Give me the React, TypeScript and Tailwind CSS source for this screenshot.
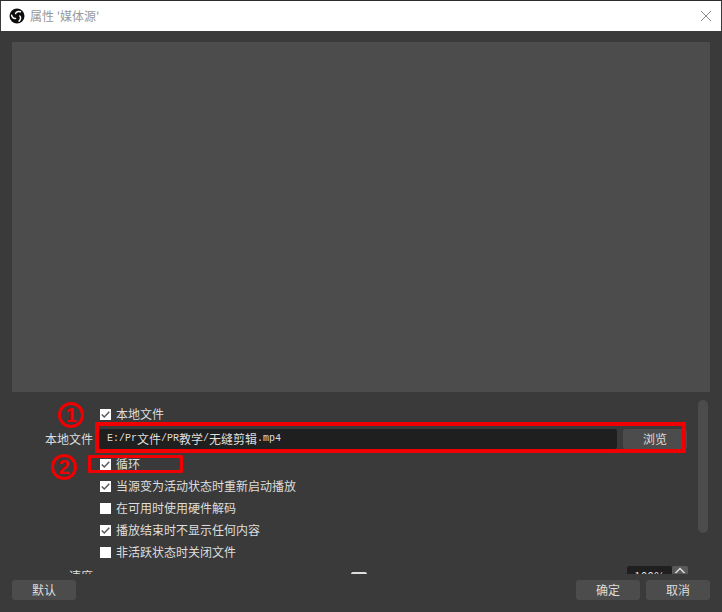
const cjk = { fontFamily: '"Noto Sans CJK SC", "Liberation Sans", sans-serif' }

function ObsLogo() {
  return (
    <svg width="16" height="16" viewBox="0 0 16 16" className="shrink-0">
      <circle cx="8" cy="8" r="7.5" fill="#0d0d0d" />
      <g fill="none" stroke="#fff" strokeWidth="1.5" strokeLinecap="round">
        <path d="M6.6 5.6C6.900 3.900 9.200 2.900 11.400 3.700" />
        <path d="M6.6 5.6C6.900 3.900 9.200 2.900 11.400 3.700" transform="rotate(120 8 8)" />
        <path d="M6.6 5.6C6.900 3.900 9.200 2.900 11.400 3.700" transform="rotate(240 8 8)" />
      </g>
    </svg>
  )
}

function CheckRow({ label, checked }: { label: string; checked: boolean }) {
  return (
    <div className="flex h-[22px] items-center pl-[88px]">
      <span className="flex h-[11px] w-[11px] items-center justify-center bg-white">
        {checked && (
          <svg width="11" height="11" viewBox="0 0 11 11">
            <path d="M1.800 5.500l2.500 2.500L9.300 2.700" fill="none" stroke="#5a5a5a" strokeWidth="1.5" />
          </svg>
        )}
      </span>
      <span className="ml-[5px] text-xs text-[#dedede]">{label}</span>
    </div>
  )
}

function DarkButton({ label, className }: { label: string; className: string }) {
  return (
    <button className={`flex h-5 items-center justify-center rounded-[3px] bg-[#4c4c4c] text-xs text-[#dedede] ${className}`}>
      {label}
    </button>
  )
}

function Mono({ children }: { children: string }) {
  return <span className="font-['Liberation_Mono'] text-[10px]">{children}</span>
}

export default function App() {
  return (
    <div className="relative flex h-[612px] w-[722px] flex-col overflow-hidden bg-[#3a3a3a]" style={cjk}>
      {/* Barra de titulo */}
      <div className="border-t border-[#2d2d2d]">
        <div className="mx-px flex h-[30px] items-center bg-white pl-2 pr-[9px]">
          <ObsLogo />
          <span className="ml-[5px] text-xs text-[#999999]">属性 '媒体源'</span>
          <svg width="12" height="12" viewBox="0 0 12 12" className="ml-auto">
            <path d="M1 1l10 10M11 1L1 11" stroke="#8a8a8a" strokeWidth="1" />
          </svg>
        </div>
      </div>

      <div className="flex flex-1 flex-col px-3 pt-[11px]">
        {/* Vista previa */}
        <div className="h-[350px] bg-[#4c4c4c]" />

        {/* Propiedades */}
        <div className="relative h-[182px] overflow-hidden pt-[11px]">
          <CheckRow label="本地文件" checked />
          <div className="mt-1 flex h-5 items-center">
            <span className="w-[81px] text-right text-xs text-[#dedede]">本地文件</span>
            <div className="ml-[6px] flex h-5 w-[518px] items-center rounded-[2px] bg-[#1f1f1f] pl-2 text-xs text-[#dedede]">
              <Mono>E:/Pr</Mono>文件<Mono>/PR</Mono>教学<Mono>/</Mono>无缝剪辑<Mono>.mp4</Mono>
            </div>
            <DarkButton label="浏览" className="ml-[6px] w-16" />
          </div>
          <div className="mt-1">
            <CheckRow label="循环" checked />
            <CheckRow label="当源变为活动状态时重新启动播放" checked />
            <CheckRow label="在可用时使用硬件解码" checked={false} />
            <CheckRow label="播放结束时不显示任何内容" checked />
            <CheckRow label="非活跃状态时关闭文件" checked={false} />
          </div>
          <div className="mt-[3px] flex h-5 items-center">
            <span className="w-[81px] text-right text-xs text-[#dedede]">速度</span>
            <div className="relative ml-[6px] h-5 w-[516px]">
              <div className="mx-auto mt-[6px] h-[14px] w-4 translate-x-[2px] rounded-[2px] bg-[#dedede]" />
            </div>
            <div className="ml-[12px] flex h-5 w-[45px] justify-center rounded-[2px] bg-[#1f1f1f] text-xs leading-5 text-[#dedede]">100%</div>
            <div className="flex h-5 w-4 items-start justify-center rounded-[2px] bg-[#5a5a5a] pt-[1px]">
              <svg width="12" height="7" viewBox="0 0 12 7">
                <path d="M1.500 6l4.500-4.500L10.500 6" fill="none" stroke="#dedede" strokeWidth="1.500" />
              </svg>
            </div>
          </div>
          {/* Scroll */}
          <div className="absolute right-[2px] top-2 h-[133px] w-[10px] rounded-[5px] bg-[#4c4c4c]" />
        </div>

        {/* Botones */}
        <div className="mt-[6px] flex">
          <DarkButton label="默认" className="w-16" />
          <DarkButton label="确定" className="ml-auto w-16" />
          <DarkButton label="取消" className="ml-[6px] w-16" />
        </div>
      </div>

      {/* Anotaciones rojas */}
      <div className="absolute left-[95px] top-[422px] h-[31px] w-[591px] rounded-[1px] border-[4px] border-[#f00000]" />
      <div className="absolute left-[88px] top-[455px] h-[18px] w-[95px] rounded-[1px] border-[3px] border-[#f00000]" />
      <div className="absolute left-[58px] top-[402px] flex h-[26px] w-[26px] items-center justify-center rounded-full border-[3px] border-[#f00000] font-['Liberation_Sans'] text-xl font-bold text-[#f00000]">1</div>
      <div className="absolute left-[51px] top-[454px] flex h-[26px] w-[26px] items-center justify-center rounded-full border-[3px] border-[#f00000] font-['Liberation_Sans'] text-xl font-bold text-[#f00000]">2</div>
    </div>
  )
}
